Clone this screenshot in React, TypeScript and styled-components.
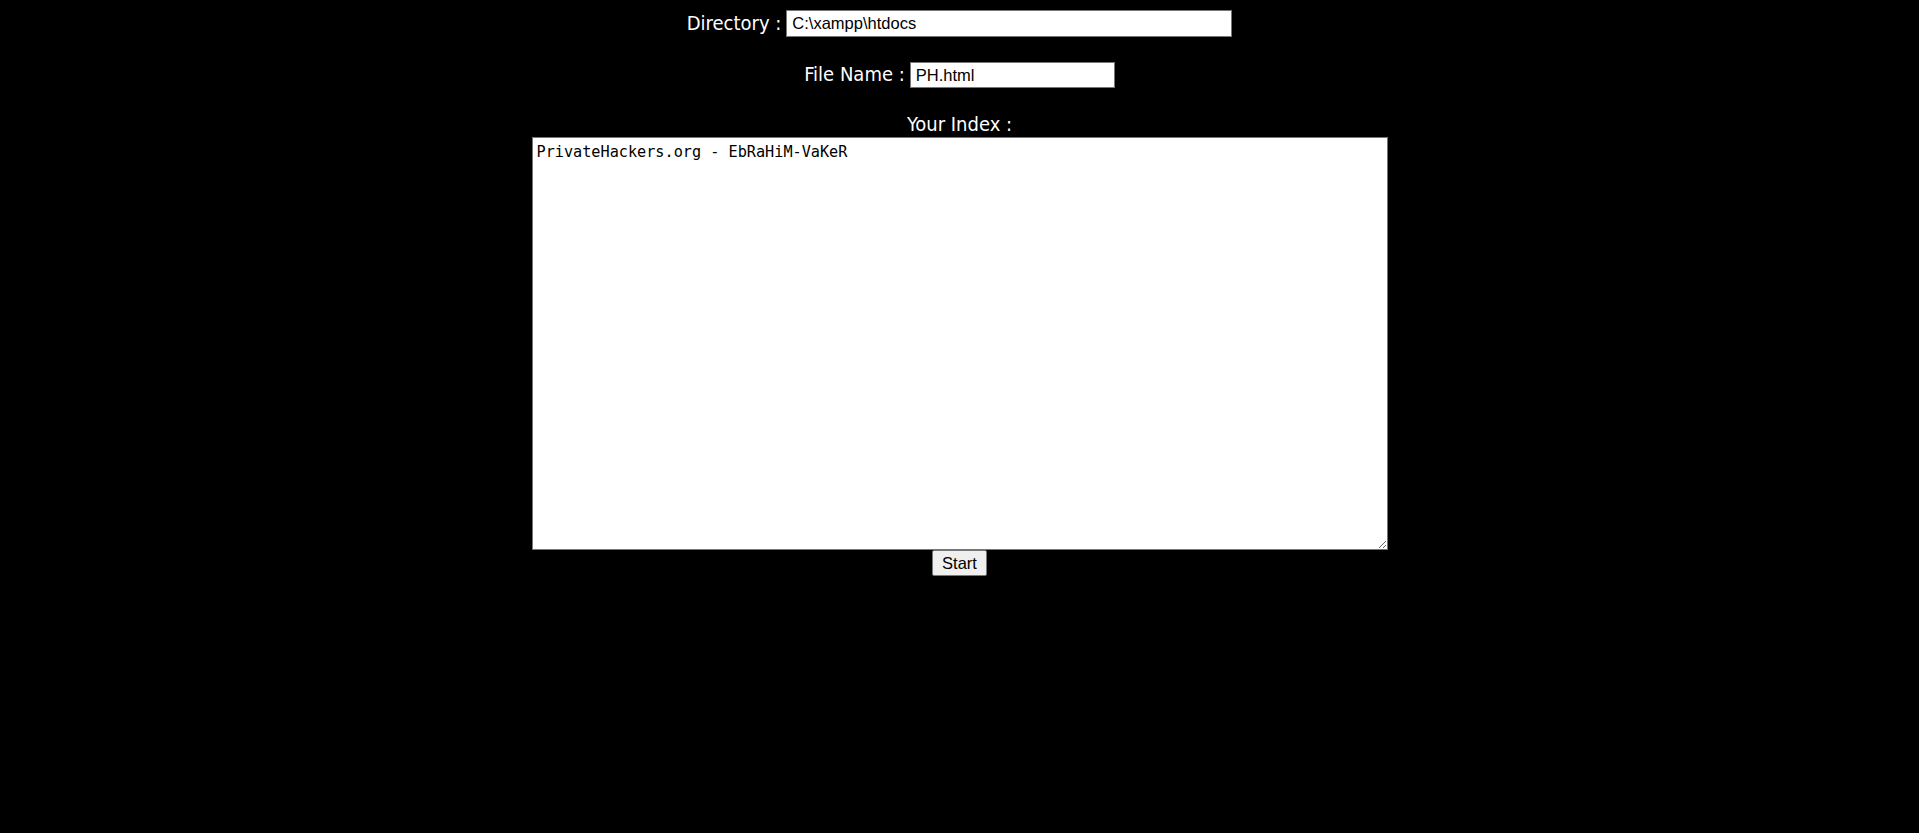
import React from "react";
import styled, { createGlobalStyle } from "styled-components";

const GlobalStyle = createGlobalStyle`
  html, body {
    margin: 0;
    padding: 0;
    background: #000;
  }
  body {
    font-family: "Liberation Sans", Arial, sans-serif;
  }
`;

const Page = styled.form`
  display: flex;
  flex-direction: column;
  align-items: center;
  padding-top: 10px;
  min-height: 833px;
  box-sizing: border-box;
`;

const FieldRow = styled.div<{ $top: number }>`
  display: flex;
  align-items: center;
  justify-content: center;
  gap: 5px;
  margin-top: ${(p) => p.$top}px;
`;

const Label = styled.label`
  color: #fff;
  font-family: "DejaVu Sans Condensed", "DejaVu Sans", sans-serif;
  font-stretch: condensed;
  font-size: 20px;
  line-height: 22px;
  white-space: nowrap;
  margin-top: -2px;
`;

const IndexLabel = styled(Label)`
  display: block;
  margin-top: 25px;
  margin-bottom: 2px;
`;

const TextInput = styled.input<{ $width: number; $height: number }>`
  box-sizing: border-box;
  width: ${(p) => p.$width}px;
  height: ${(p) => p.$height}px;
  border: 1px solid #767676;
  padding: 1px 5px;
  background: #fff;
  color: #000;
  font-family: "Liberation Sans", Arial, sans-serif;
  font-size: 16.5px;
  outline: none;
`;

const IndexArea = styled.textarea`
  box-sizing: border-box;
  display: block;
  width: 856px;
  height: 413px;
  border: 1px solid #767676;
  padding: 5px 4px 3px;
  background: #fff;
  color: #000;
  font-family: "DejaVu Sans Mono", "Liberation Mono", monospace;
  font-size: 15.2px;
  line-height: 18px;
  outline: none;
`;

const StartButton = styled.button`
  box-sizing: border-box;
  width: 55px;
  height: 26px;
  padding: 0;
  border: 1px solid #767676;
  border-radius: 2px;
  background: #efefef;
  color: #000;
  font-family: "Liberation Sans", Arial, sans-serif;
  font-size: 16.5px;
  cursor: pointer;
`;

export default function App() {
  return (
    <>
      <GlobalStyle />
      <Page onSubmit={(e) => e.preventDefault()}>
        <FieldRow $top={0}>
          <Label>Directory :</Label>
          <TextInput $width={446} $height={27} defaultValue="C:\xampp\htdocs" />
        </FieldRow>
        <FieldRow $top={25}>
          <Label>File Name :</Label>
          <TextInput $width={205} $height={26} defaultValue="PH.html" />
        </FieldRow>
        <IndexLabel>Your Index :</IndexLabel>
        <IndexArea defaultValue="PrivateHackers.org - EbRaHiM-VaKeR" />
        <StartButton type="submit">Start</StartButton>
      </Page>
    </>
  );
}
